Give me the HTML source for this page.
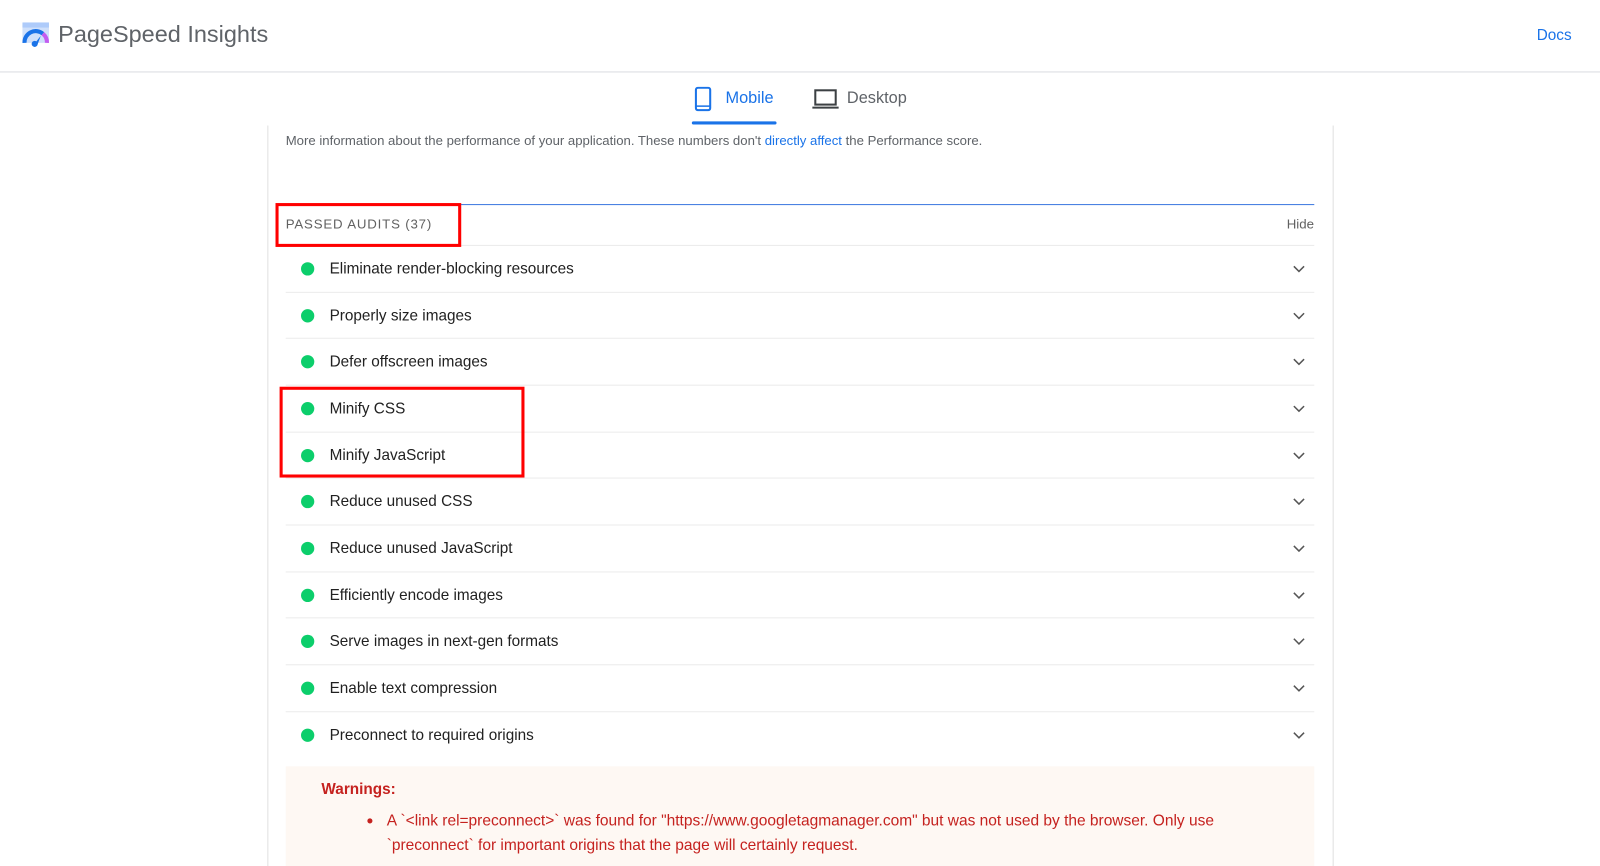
<!DOCTYPE html>
<html><head><meta charset="utf-8"><style>
*{margin:0;padding:0;box-sizing:border-box}
body{width:1600px;height:849px;overflow:hidden;background:#fff;font-family:"Liberation Sans",Arial,sans-serif;position:relative}
#w{position:absolute;left:0;top:0;width:1568px;height:832px;transform:scale(1.0204);transform-origin:0 0}
.hdr{position:absolute;left:0;top:0;width:1568px;height:71px;border-bottom:1px solid #dadce0}
.title{position:absolute;left:57px;top:20px;font-size:23px;color:#5f6368}
.docs{position:absolute;left:1506px;top:26px;font-size:15px;color:#1a73e8}
.tab{position:absolute;top:88px;font-size:16px}
.card{position:absolute;left:262px;top:123px;width:1045px;height:726px;border-left:1px solid #e0e0e0;border-right:1px solid #e0e0e0}
.info{position:absolute;left:280px;top:130px;font-size:12.9px;color:#5f6368}
.info a{color:#1a73e8;text-decoration:none}
.blue{position:absolute;left:280px;top:200px;width:1008px;height:1px;background:#3c78e0}
.pa{position:absolute;left:280px;top:212px;font-size:13px;letter-spacing:.8px;color:#616161}
.hide{position:absolute;left:1261px;top:212px;font-size:13px;color:#616161}
.row{position:absolute;left:280px;width:1008px;height:46px;border-top:1px solid #ebebeb}
.row .dot{position:absolute;left:15px;top:16px;width:13px;height:13px;border-radius:50%;background:#0cce6b}
.row .t{position:absolute;left:43px;top:14px;font-size:15px;color:#212121}
.row svg{position:absolute;left:987px;top:19px}
.redbox{position:absolute;border:3px solid #f00}
.warn{position:absolute;left:280px;top:751px;width:1008px;height:98px;background:#fef8f3}
.warn h4{position:absolute;left:35px;top:14px;font-size:15px;color:#c5221f;font-weight:bold}
.warn p{position:absolute;left:99px;top:42px;font-size:15.2px;color:#c5221f;line-height:24px;width:840px}
</style></head><body><div id="w">
<div class="hdr">
<svg style="position:absolute;left:21px;top:21px" width="28" height="27" viewBox="0 0 28 27">
<rect x="1" y="1" width="26" height="20" rx="2" fill="#cfe0fb"/><rect x="1" y="1" width="26" height="5" fill="#aecbfa"/>
<path d="M3 21 A11 11 0 0 1 21 12" stroke="#1a73e8" stroke-width="4" fill="none"/>
<path d="M21 12 A11 11 0 0 1 25 21" stroke="#c35cf0" stroke-width="4" fill="none"/>
<path d="M12 23 L19 14 L16 22 Z" fill="#1a73e8"/><circle cx="13" cy="22" r="3" fill="#1a73e8"/>
</svg>
<div class="title">PageSpeed Insights</div>
<div class="docs">Docs</div>
</div>
<svg style="position:absolute;left:680px;top:85px" width="18" height="24" viewBox="0 0 18 24"><rect x="2" y="1" width="14" height="22" rx="2" fill="none" stroke="#1a73e8" stroke-width="2"/><line x1="2" y1="19" x2="16" y2="19" stroke="#1a73e8" stroke-width="1.5"/></svg>
<div class="tab" style="left:711px;color:#1a73e8">Mobile</div>
<div style="position:absolute;left:678px;top:119px;width:83px;height:3px;background:#1a73e8;border-radius:2px"></div>
<svg style="position:absolute;left:796px;top:87px" width="26" height="20" viewBox="0 0 26 20"><rect x="3" y="1.5" width="20" height="14" fill="none" stroke="#3c4043" stroke-width="2"/><line x1="0" y1="18.5" x2="26" y2="18.5" stroke="#3c4043" stroke-width="2"/></svg>
<div class="tab" style="left:830px;color:#5f6368">Desktop</div>
<div class="card"></div>
<div class="info">More information about the performance of your application. These numbers don't <a>directly affect</a> the Performance score.</div>
<div class="blue"></div>
<div class="pa">PASSED AUDITS (37)</div>
<div class="hide">Hide</div>
<div class="row" style="top:240px"><div class="dot"></div><div class="t">Eliminate render-blocking resources</div><svg width="12" height="8"><path d="M1 1l5 5 5-5" stroke="#555" stroke-width="1.5" fill="none"/></svg></div>
<div class="row" style="top:286px"><div class="dot"></div><div class="t">Properly size images</div><svg width="12" height="8"><path d="M1 1l5 5 5-5" stroke="#555" stroke-width="1.5" fill="none"/></svg></div>
<div class="row" style="top:331px"><div class="dot"></div><div class="t">Defer offscreen images</div><svg width="12" height="8"><path d="M1 1l5 5 5-5" stroke="#555" stroke-width="1.5" fill="none"/></svg></div>
<div class="row" style="top:377px"><div class="dot"></div><div class="t">Minify CSS</div><svg width="12" height="8"><path d="M1 1l5 5 5-5" stroke="#555" stroke-width="1.5" fill="none"/></svg></div>
<div class="row" style="top:423px"><div class="dot"></div><div class="t">Minify JavaScript</div><svg width="12" height="8"><path d="M1 1l5 5 5-5" stroke="#555" stroke-width="1.5" fill="none"/></svg></div>
<div class="row" style="top:468px"><div class="dot"></div><div class="t">Reduce unused CSS</div><svg width="12" height="8"><path d="M1 1l5 5 5-5" stroke="#555" stroke-width="1.5" fill="none"/></svg></div>
<div class="row" style="top:514px"><div class="dot"></div><div class="t">Reduce unused JavaScript</div><svg width="12" height="8"><path d="M1 1l5 5 5-5" stroke="#555" stroke-width="1.5" fill="none"/></svg></div>
<div class="row" style="top:560px"><div class="dot"></div><div class="t">Efficiently encode images</div><svg width="12" height="8"><path d="M1 1l5 5 5-5" stroke="#555" stroke-width="1.5" fill="none"/></svg></div>
<div class="row" style="top:605px"><div class="dot"></div><div class="t">Serve images in next-gen formats</div><svg width="12" height="8"><path d="M1 1l5 5 5-5" stroke="#555" stroke-width="1.5" fill="none"/></svg></div>
<div class="row" style="top:651px"><div class="dot"></div><div class="t">Enable text compression</div><svg width="12" height="8"><path d="M1 1l5 5 5-5" stroke="#555" stroke-width="1.5" fill="none"/></svg></div>
<div class="row" style="top:697px"><div class="dot"></div><div class="t">Preconnect to required origins</div><svg width="12" height="8"><path d="M1 1l5 5 5-5" stroke="#555" stroke-width="1.5" fill="none"/></svg></div>
<div class="warn"><h4>Warnings:</h4><p>A `&lt;link rel=preconnect&gt;` was found for "https://www.googletagmanager.com" but was not used by the browser. Only use `preconnect` for important origins that the page will certainly request.</p>
<div style="position:absolute;left:80px;top:51px;width:5px;height:5px;border-radius:50%;background:#c5221f"></div></div>
<div class="redbox" style="left:270px;top:199px;width:182px;height:43px"></div>
<div class="redbox" style="left:274px;top:379px;width:240px;height:89px"></div>
</div></body></html>
